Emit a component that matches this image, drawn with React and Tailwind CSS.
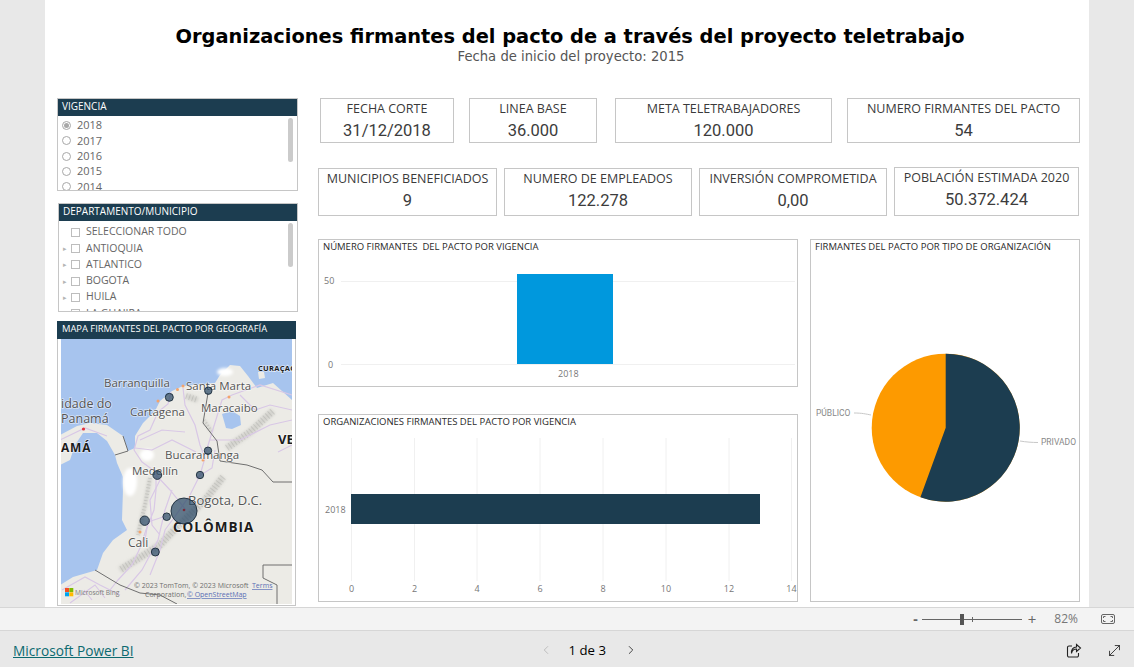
import { ChevronLeft, ChevronRight, MoveDiagonal } from 'lucide-react'

const years = ['2018', '2017', '2016', '2015', '2014']
const departments = ['SELECCIONAR TODO', 'ANTIOQUIA', 'ATLANTICO', 'BOGOTA', 'HUILA', 'LA GUAJIRA']

const Kpi = ({ label, value, className }) => (
  <div className={`flex shrink-0 flex-col items-center border border-[#c6c6c6] bg-white ${className}`}>
    <span className="mt-[2px] whitespace-nowrap text-[12.5px] leading-[16px] text-[#3a3a3a]">{label}</span>
    <span className="mt-[4px] whitespace-nowrap font-['Roboto',sans-serif] text-[16.5px] leading-[20px] text-[#3c3c3c]">{value}</span>
  </div>
)

const SlicerHead = ({ children, className }) => (
  <div className={`-mx-px -mt-px h-[18px] truncate bg-[#1c3d50] pl-[5px] leading-[16px] text-white ${className}`}>{children}</div>
)

const Scrollbar = ({ className }) => (
  <span className={`absolute right-[4px] w-[5px] rounded-[3px] bg-[#cbcbcb] ${className}`} />
)

const VigenciaSlicer = () => (
  <div className="relative h-[93px] w-[241px] overflow-hidden border border-[#c6c6c6]">
    <SlicerHead className="text-[10px]">VIGENCIA</SlicerHead>
    <div className="pl-[4px] pt-[2px]">
      {years.map((y, i) => (
        <div key={y} className="flex h-[15.3px] items-center gap-[6px] text-[11px] text-[#666]">
          <span className="flex h-[9px] w-[9px] items-center justify-center rounded-full border border-[#a8a8a8]">
            {i === 0 && <span className="h-[5px] w-[5px] rounded-full bg-[#a8a8a8]" />}
          </span>
          {y}
        </div>
      ))}
    </div>
    <Scrollbar className="top-[19px] h-[44px]" />
  </div>
)

const DepartmentSlicer = () => (
  <div className="relative mt-[12px] ml-px h-[109px] w-[240px] overflow-hidden border border-[#c6c6c6]">
    <SlicerHead className="text-[10px]">DEPARTAMENTO/MUNICIPIO</SlicerHead>
    <div className="pt-[3px] pl-[4px]">
      {departments.map((d, i) => (
        <div key={d} className="flex h-[16.3px] items-center text-[10.5px] text-[#666]">
          <span className="w-[8px] text-[7px] leading-none text-[#b5b5b5]">{i > 0 ? '▸' : ''}</span>
          <span className="h-[9px] w-[9px] border border-[#bdbdbd]" />
          <span className="ml-[6px] whitespace-nowrap">{d}</span>
        </div>
      ))}
    </div>
    <Scrollbar className="top-[19px] h-[44px]" />
  </div>
)

const bubbles = [
  [169.3, 397.3, 4], [208.3, 390.7, 3.7], [208, 450.7, 3.7], [157.3, 475, 4.4], [200, 475, 3.7],
  [184, 511, 13], [166.7, 516.7, 3.8], [144.7, 520.7, 4.7], [155.3, 552, 4],
]

const cities = [
  [177.5, 389.5], [183, 386], [158, 401], [229, 397], [203, 460], [140, 532],
]

const roads = [
  'M171 392 L168 404 L158 412 L150 430 L138 436 L134 450 L142 462 L156 472 L156 490 L154 510 L146 530 L140 548 L132 565 L118 580 L110 590',
  'M183 388 L185 405 L195 425 L200 445 L205 458 L200 475 L190 495 L176 515 L165 530 L160 550 L150 575',
  'M156 475 L170 490 L186 510',
  'M205 455 L222 400 L232 395 L260 385 L292 395',
  'M210 440 L240 440 L270 425 L292 420',
  'M166 516 L148 522 L145 540',
  'M60 440 L85 428 L107 436',
  'M135 448 L152 450 L172 440 L196 452',
  'M62 590 L85 577 L100 585 L120 595',
  'M70 603 L95 585 L105 598',
  'M278 452 L292 445',
  'M160 480 L150 500 L152 525 L160 535',
  'M172 490 L165 510 L158 540 L142 570 L125 590',
  'M196 478 L212 468 L215 450',
  'M140 440 L162 430 L185 432',
  'M240 395 L255 410 L270 405 L292 410',
  'M84 590 L92 600',
]

const terrain = [
  ['7', 'M227 448 L250 432 L273 411'],
  ['7', 'M223 477 L205 500 L177 527 L160 545 L120 570'],
  ['4', 'M150 478 L145 505 L138 535'],
  ['3', 'M204 420 L212 432'],
  ['6', 'M186 396 L198 400'],
]

const MapLabel = ({ x, y, size = 12, bold, fill = '#555555', spacing, children }) => (
  <text x={x} y={y} fontSize={size} fontWeight={bold ? 700 : 400} fill={bold ? '#1c1c1c' : fill} letterSpacing={spacing}
    stroke="#ffffff" strokeOpacity="0.55" strokeWidth="1.6" paintOrder="stroke">{children}</text>
)

const MapDrawing = () => (
  <svg viewBox="61 339 231 265" className="block h-[265px] w-[231px] font-['Open_Sans',sans-serif]">
    <defs>
      <filter id="soft" x="-20%" y="-20%" width="140%" height="140%"><feGaussianBlur stdDeviation="1.6" /></filter>
      <filter id="softer" x="-20%" y="-20%" width="140%" height="140%"><feGaussianBlur stdDeviation="0.4" /></filter>
    </defs>
    <rect x="61" y="339" width="231" height="265" fill="#a7c4ee" />
    <path fill="#ecebe6" d="M292 400 L273 383 L257 388 L248 376 L240 366 L230 365 L220 375 L215 383 L193 385 L183 386 L172 391 L160 401 L155 411 L143 423 L135 436 L135 448 L128 451 L123 436 L107 425 L90 423 L77 426 L60 435 L60 465 L70 460 L75 445 L83 433 L97 433 L107 441 L115 455 L117 463 L123 477 L123 490 L122 520 L127 530 L113 540 L103 553 L97 570 L73 577 L60 585 L60 605 L292 605 Z" />
    <path fill="#a7c4ee" d="M222 414 L232 411 L240 416 L241 425 L232 429 L226 428 Z" />
    <path fill="#ecebe6" d="M258 372 L264 372 L265 378 L259 379 Z" />
    <g filter="url(#soft)" fill="#ffffff">
      <ellipse cx="147" cy="455" rx="7" ry="6" />
      <ellipse cx="130" cy="482" rx="7" ry="14" />
      <ellipse cx="225" cy="372" rx="8" ry="4" />
    </g>
    <g filter="url(#soft)" fill="none" stroke="#b8b8b3" strokeOpacity="0.45">
      {terrain.map(([w, d]) => <path key={d} strokeWidth={w} d={d} />)}
    </g>
    <g filter="url(#softer)" fill="none" stroke="#8f8f8b" strokeOpacity="0.28">
      {terrain.map(([w, d]) => <path key={d} strokeWidth={w} strokeDasharray="1 2.2" d={d} />)}
    </g>
    <g filter="url(#softer)" fill="none" stroke="#d9c8e6" strokeWidth="1.2">
      {roads.map((d) => <path key={d} d={d} />)}
    </g>
    <g filter="url(#softer)" fill="none" stroke="#6f6f6f" strokeWidth="1">
      <path d="M208 393 L203 423 L217 441 L220 461 L247 465 L262 470 L273 482 L292 482" />
      <path d="M123 436 L128 451 L115 455" />
      <path d="M95 570 L120 585 L140 593 L160 595 L177 604" />
      <path d="M292 565 L263 565 L263 578 L277 585 L277 604" />
    </g>
    {cities.map(([x, y]) => <circle key={`${x}-${y}`} cx={x} cy={y} r="1.5" fill="#f4a36b" />)}
    <circle cx="83.5" cy="429" r="1.6" fill="#e0313a" />
    <MapLabel x="104" y="387" size={11.5}>Barranquilla</MapLabel>
    <MapLabel x="186" y="390" size={11.5}>Santa Marta</MapLabel>
    <MapLabel x="130" y="416" size={11.5}>Cartagena</MapLabel>
    <MapLabel x="201" y="412" size={11.5}>Maracaibo</MapLabel>
    <MapLabel x="61" y="408" size={12.5}>idade do</MapLabel>
    <MapLabel x="61" y="423" size={12.5}>Panamá</MapLabel>
    <MapLabel x="61" y="452" size={12} bold spacing="0.8">AMÁ</MapLabel>
    <MapLabel x="278" y="444" size={13} bold>VE</MapLabel>
    <MapLabel x="258" y="371" size={7.5} bold spacing="0.3">CURAÇAO</MapLabel>
    <MapLabel x="165" y="459" size={11.5}>Bucaramanga</MapLabel>
    <MapLabel x="132" y="475" size={11.5}>Medellín</MapLabel>
    <MapLabel x="188" y="505" size={13}>Bogota, D.C.</MapLabel>
    <MapLabel x="173" y="532" size={13.5} bold spacing="1">COLÔMBIA</MapLabel>
    <MapLabel x="128" y="547" size={12}>Cali</MapLabel>
    {bubbles.map(([x, y, r]) => (
      <circle key={`${x}-${y}`} cx={x} cy={y} r={r} fill="#2b4a66" fillOpacity="0.72" stroke="#1b2b3a" strokeWidth="0.9" />
    ))}
    <circle cx="184" cy="510" r="1.3" fill="#7a2b3a" />
    <rect x="65" y="588" width="4" height="4" fill="#f25022" />
    <rect x="69.3" y="588" width="4" height="4" fill="#7fba00" />
    <rect x="65" y="592.3" width="4" height="4" fill="#00a4ef" />
    <rect x="69.3" y="592.3" width="4" height="4" fill="#ffb900" />
    <text x="75" y="595" fontSize="6.6" fill="#7a7a7a">Microsoft Bing</text>
    <text x="134" y="588" fontSize="7" fill="#6f6f6f">© 2023 TomTom, © 2023 Microsoft</text>
    <text x="252" y="588" fontSize="7" fill="#5a6fb5" textDecoration="underline">Terms</text>
    <text x="145" y="597" fontSize="7" fill="#6f6f6f">Corporation,</text>
    <text x="187" y="597" fontSize="7" fill="#5a6fb5" textDecoration="underline">© OpenStreetMap</text>
  </svg>
)

const MapPanel = () => (
  <div className="mt-[9px] h-[285px] w-[239px] border border-[#c6c6c6]">
    <SlicerHead className="text-[9.4px]">MAPA FIRMANTES DEL PACTO POR GEOGRAFÍA</SlicerHead>
    <div className="pl-[3px]"><MapDrawing /></div>
  </div>
)

const ChartTitle = ({ children }) => (
  <div className="truncate whitespace-pre pl-[4px] text-[9.5px] leading-[14px] text-[#2a2a2a]">{children}</div>
)

const axisText = "font-['Open_Sans',sans-serif]"

const VigenciaColumns = () => (
  <svg viewBox="319 254 478 132" className={`block h-[132px] w-[478px] ${axisText}`}>
    <line x1="341" x2="795" y1="281.5" y2="281.5" stroke="#f0f0f0" />
    <line x1="341" x2="795" y1="364.5" y2="364.5" stroke="#f0f0f0" />
    <rect x="517" y="274" width="96" height="90" fill="#0098dd" />
    <text x="324" y="284" fontSize="9" fill="#777">50</text>
    <text x="328" y="367.5" fontSize="9" fill="#777">0</text>
    <text x="558" y="376.5" fontSize="9" fill="#777">2018</text>
  </svg>
)

const ticks = [[0, 351.5], [2, 414.5], [4, 477], [6, 540], [8, 603], [10, 666], [12, 729], [14, 791.5]]

const VigenciaBars = () => (
  <svg viewBox="319 429 478 172" className={`block h-[172px] w-[478px] ${axisText}`}>
    {ticks.map(([t, x]) => (
      <g key={t}>
        <line x1={x} x2={x} y1="438" y2="581" stroke="#f0f0f0" />
        <text x={x} y="592" fontSize="9" fill="#777" textAnchor="middle">{t}</text>
      </g>
    ))}
    <rect x="351" y="494" width="409" height="30" fill="#1c3d50" />
    <text x="325" y="512.5" fontSize="9" fill="#777">2018</text>
  </svg>
)

const TypePie = () => (
  <svg viewBox="811 254 268 346" className={`block h-[346px] w-[268px] ${axisText}`}>
    <circle cx="945.7" cy="427.7" r="74" fill="#fd9a00" />
    <path d="M945.7 427.7 L945.7 353.7 A74 74 0 1 1 920.4 497.2 Z" fill="#1c3d50" />
    <path d="M854 413 C862 413 866 414 871 415" fill="none" stroke="#c8c8c8" />
    <path d="M1020 441 C1026 442 1032 442.5 1038 442.5" fill="none" stroke="#c8c8c8" />
    <text x="816" y="416" fontSize="8.5" fontFamily="Roboto, sans-serif" fill="#888">PÚBLICO</text>
    <text x="1041" y="444.5" fontSize="8.5" fontFamily="Roboto, sans-serif" fill="#888">PRIVADO</text>
  </svg>
)

const ShareIcon = () => (
  <svg viewBox="0 0 16 16" className="h-[16px] w-[16px]" fill="none" stroke="#222" strokeWidth="1.1">
    <path d="M6 3 H3 a1.5 1.5 0 0 0 -1.5 1.5 V12.5 A1.5 1.5 0 0 0 3 14 H11 a1.5 1.5 0 0 0 1.5 -1.5 V10" />
    <path d="M5.5 10.5 C6 7.5 8 6 10.5 6 V8.5 L14.5 5 L10.5 1.5 V4 C7 4 5 7 5.5 10.5 Z" />
  </svg>
)

const FitIcon = () => (
  <svg viewBox="0 0 14 10" className="h-[10px] w-[14px]" fill="none" stroke="#666" strokeWidth="1">
    <rect x="0.5" y="0.5" width="13" height="9" rx="1.5" />
    <path d="M2.5 4 V2.5 H4.5 M9.5 2.5 H11.5 V4 M11.5 6 V7.5 H9.5 M4.5 7.5 H2.5 V6" />
  </svg>
)

export default function App() {
  return (
    <div className="flex h-[667px] w-[1134px] flex-col overflow-hidden bg-[#e8e8e8] font-['Open_Sans',sans-serif]">
      <div className="mx-[45px] h-[607px] w-[1044px] shrink-0 overflow-hidden bg-white">
        <div className="h-[98px] pt-[25px] pl-[6px] text-center font-['DejaVu_Sans',sans-serif]">
          <h1 className="text-[19.4px] leading-[24px] font-bold text-black">Organizaciones firmantes del pacto de a través del proyecto teletrabajo</h1>
          <p className="pl-[2px] text-[13.2px] leading-[16px] text-[#555]">Fecha de inicio del proyecto: 2015</p>
        </div>
        <div className="flex pl-[12px]">
          <div className="w-[241px] shrink-0">
            <VigenciaSlicer />
            <DepartmentSlicer />
            <MapPanel />
          </div>
          <div className="ml-[20px] w-[762px] shrink-0">
            <div className="flex pl-[2px]">
              <Kpi className="h-[45px] w-[134px]" label="FECHA CORTE" value="31/12/2018" />
              <Kpi className="ml-[15px] h-[45px] w-[128px]" label="LINEA BASE" value="36.000" />
              <Kpi className="ml-[18px] h-[45px] w-[217px]" label="META TELETRABAJADORES" value="120.000" />
              <Kpi className="ml-[15px] h-[45px] w-[233px]" label="NUMERO FIRMANTES DEL PACTO" value="54" />
            </div>
            <div className="mt-[25px] flex">
              <Kpi className="h-[48px] w-[179px]" label="MUNICIPIOS BENEFICIADOS" value="9" />
              <Kpi className="ml-[7px] h-[48px] w-[188px]" label="NUMERO DE EMPLEADOS" value="122.278" />
              <Kpi className="ml-[7px] h-[48px] w-[188px]" label="INVERSIÓN COMPROMETIDA" value="0,00" />
              <Kpi className="ml-[7px] -mt-px h-[49px] w-[185px]" label="POBLACIÓN ESTIMADA 2020" value="50.372.424" />
            </div>
            <div className="mt-[23px] flex">
              <div className="w-[480px] shrink-0">
                <div className="h-[148px] border border-[#c6c6c6]">
                  <ChartTitle>NÚMERO FIRMANTES  DEL PACTO POR VIGENCIA</ChartTitle>
                  <VigenciaColumns />
                </div>
                <div className="mt-[27px] h-[188px] border border-[#c6c6c6]">
                  <ChartTitle>ORGANIZACIONES FIRMANTES DEL PACTO POR VIGENCIA</ChartTitle>
                  <VigenciaBars />
                </div>
              </div>
              <div className="ml-[12px] h-[363px] w-[270px] border border-[#c6c6c6]">
                <ChartTitle>FIRMANTES DEL PACTO POR TIPO DE ORGANIZACIÓN</ChartTitle>
                <TypePie />
              </div>
            </div>
          </div>
        </div>
      </div>

      <div className="flex h-[24px] shrink-0 items-center justify-end border-y border-[#d6d6d6] bg-[#f3f3f3] text-[#666]">
        <span className="text-[14px] leading-none font-bold">-</span>
        <div className="relative ml-[4px] h-[1px] w-[100px] bg-[#666]">
          <span className="absolute top-[-5px] left-[38px] h-[11px] w-[4px] bg-[#555]" />
          <span className="absolute top-[-2px] left-[50px] h-[5px] w-px bg-[#666]" />
        </div>
        <span className="ml-[6px] text-[15px] leading-none">+</span>
        <span className="ml-[18px] text-[12px] text-[#777]">82%</span>
        <span className="mr-[19px] ml-[23px]"><FitIcon /></span>
      </div>

      <div className="flex flex-1 items-center bg-[#e8e8e8] pt-[3px] pl-[13px]">
        <a className="text-[13.7px] leading-none text-[#0c6a70] underline">Microsoft Power BI</a>
        <div className="ml-[405px] flex items-center">
          <ChevronLeft size={14} strokeWidth={1.3} className="text-[#b0b0b0]" />
          <span className="ml-[16px] text-[13.2px] text-black">1 de 3</span>
          <ChevronRight size={14} strokeWidth={1.4} className="ml-[18px] text-[#222]" />
        </div>
        <div className="ml-auto flex items-center gap-[24px] pr-[11px]">
          <ShareIcon />
          <MoveDiagonal size={17} strokeWidth={1.2} className="text-[#222]" />
        </div>
      </div>
    </div>
  )
}
